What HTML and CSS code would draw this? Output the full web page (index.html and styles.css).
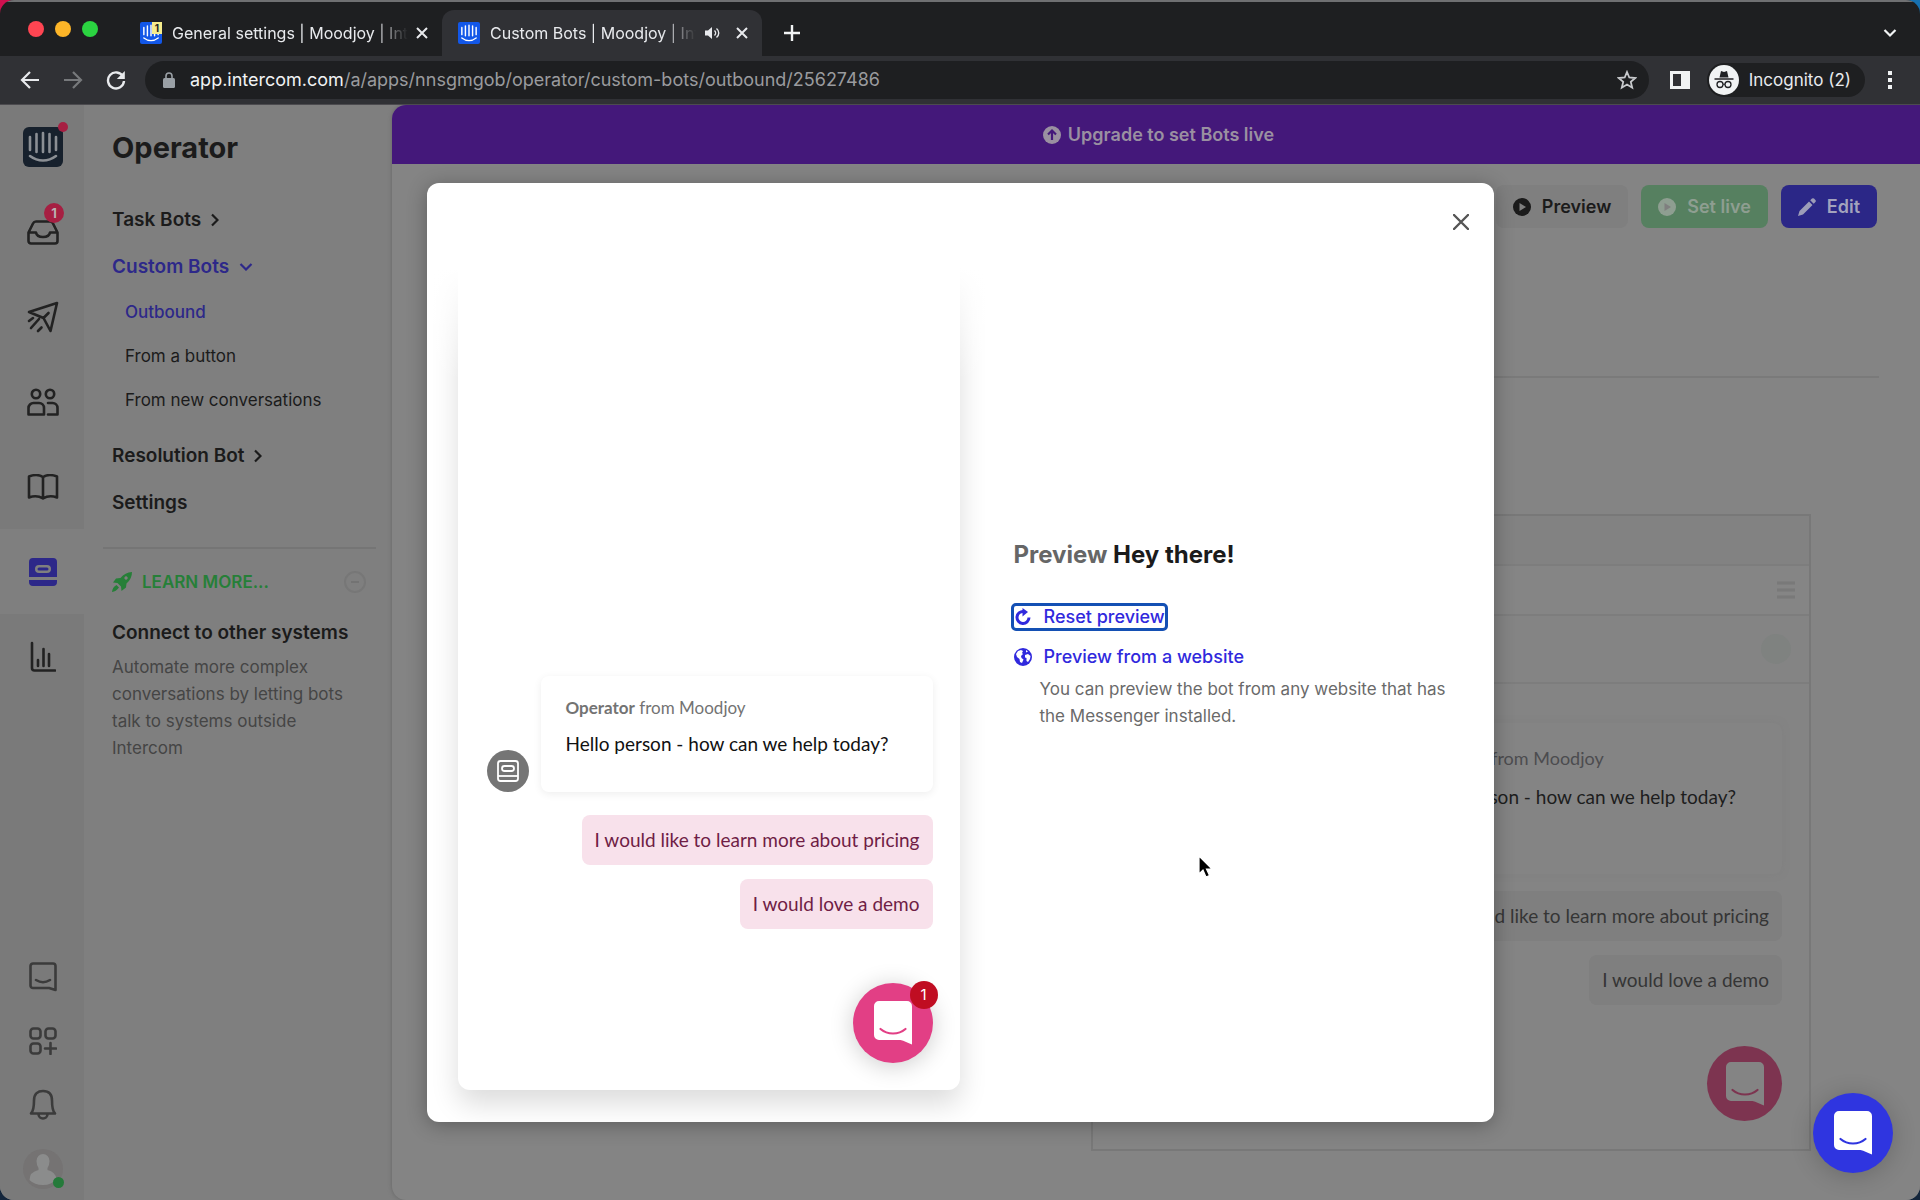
FILE: index.html
```html
<!DOCTYPE html>
<html lang="en">
<head>
<meta charset="utf-8">
<title>Custom Bots | Moodjoy | Intercom</title>
<link rel="stylesheet" href="styles.css">
</head>
<body>
<svg class="defs" width="0" height="0" aria-hidden="true">
  <symbol id="messenger" viewBox="0 0 38 44">
    <path class="card" d="M5 0h28a5 5 0 0 1 5 5v38.500c-4-1.500-8-4-11.500-4.500H5a5 5 0 0 1-5-5V5a5 5 0 0 1 5-5z"/>
    <path fill="none" stroke="currentColor" stroke-width="2.200" stroke-linecap="round" d="M6.500 28c7 6 18 6 25 0"/>
  </symbol>
  <symbol id="bars" viewBox="0 0 40 40">
    <path fill="none" stroke="currentColor" stroke-width="2.600" stroke-linecap="round" d="M7 10v13M13.500 7v18M20 6v19M26.500 7v18M33 10v13M7 29c8 6 18 6 26 0"/>
  </symbol>
  <symbol id="play" viewBox="0 0 18 18">
    <circle cx="9" cy="9" r="9" fill="currentColor"/>
    <path class="cut" d="M6.500 5l6.500 4-6.500 4z"/>
  </symbol>
</svg>

<header class="browser">
  <div class="tabs">
    <div class="lights"><i class="red"></i><i class="amber"></i><i class="green"></i></div>
    <div class="tab">
      <span class="favicon"><svg viewBox="0 0 40 40"><use href="#bars"/></svg><b>1</b></span>
      <span class="tab-title">General settings | Moodjoy | Intercom</span>
      <button class="plain" aria-label="Close tab"><svg width="12" height="12" viewBox="0 0 12 12"><path d="M1 1l10 10M11 1L1 11" stroke="#e8eaed" stroke-width="2" fill="none"/></svg></button>
    </div>
    <div class="tab active">
      <span class="favicon"><svg viewBox="0 0 40 40"><use href="#bars"/></svg></span>
      <span class="tab-title">Custom Bots | Moodjoy | Intercom</span>
      <svg class="sound" width="16" height="14" viewBox="0 0 16 14"><path d="M1 4.500h3L8 1v12L4 9.500H1z" fill="#e8eaed"/><path d="M10.500 4.500c1.500 1.500 1.500 3.500 0 5M12.500 2.500c3 2.500 3 6.500 0 9" stroke="#e8eaed" fill="none" stroke-width="1.400"/></svg>
      <button class="plain" aria-label="Close tab"><svg width="12" height="12" viewBox="0 0 12 12"><path d="M1 1l10 10M11 1L1 11" stroke="#e8eaed" stroke-width="2" fill="none"/></svg></button>
    </div>
    <button class="plain new-tab" aria-label="New tab"><svg width="16" height="16" viewBox="0 0 16 16"><path d="M8 0v16M0 8h16" stroke="#f1f3f4" stroke-width="2.400"/></svg></button>
    <button class="plain tab-search" aria-label="Search tabs"><svg width="14" height="10" viewBox="0 0 14 10"><path d="M1.500 2L7 7.500 12.500 2" stroke="#f1f3f4" stroke-width="2.200" fill="none"/></svg></button>
  </div>
  <div class="toolbar">
    <button class="plain" aria-label="Back"><svg width="20" height="18" viewBox="0 0 20 18"><path d="M19 9H2M10 1L2 9l8 8" stroke="#e8eaed" stroke-width="2.200" fill="none"/></svg></button>
    <button class="plain" aria-label="Forward"><svg width="20" height="18" viewBox="0 0 20 18"><path d="M1 9h17M10 1l8 8-8 8" stroke="#77797c" stroke-width="2.200" fill="none"/></svg></button>
    <button class="plain" aria-label="Reload"><svg width="20" height="20" viewBox="0 0 20 20"><path d="M17 6.500A8 8 0 1 0 18 11" stroke="#e8eaed" stroke-width="2.400" fill="none"/><path d="M18.800 1v8h-8z" fill="#e8eaed"/></svg></button>
    <div class="address">
      <svg width="12" height="16" viewBox="0 0 12 16"><rect y="6" width="12" height="10" rx="1.500" fill="#9aa0a6"/><path d="M3 7V4a3 3 0 0 1 6 0v3" stroke="#9aa0a6" stroke-width="1.600" fill="none"/></svg>
      <span class="url"><b>app.intercom.com</b>/a/apps/nnsgmgob/operator/custom-bots/outbound/25627486</span>
      <svg width="20" height="20" viewBox="0 0 20 20"><path d="M10 2l2.300 5.500 6 .5-4.500 3.900 1.400 5.800L10 14.600l-5.200 3.100 1.400-5.800L1.700 8l6-.5z" stroke="#c8cacd" stroke-width="1.800" fill="none"/></svg>
    </div>
    <svg width="20" height="18" viewBox="0 0 20 18"><path fill="#f1f3f4" fill-rule="evenodd" d="M0 0h20v18H0zM3 3v12h8V3z"/></svg>
    <div class="incognito">
      <svg width="30" height="30" viewBox="0 0 30 30"><circle cx="15" cy="15" r="15" fill="#f1f3f4"/><path d="M10.500 12.500l1.500-6.500 3 1 3-1 1.500 6.500z" fill="#202124"/><path d="M5.500 14h19" stroke="#202124" stroke-width="1.500"/><circle cx="11" cy="19.500" r="3" fill="none" stroke="#202124" stroke-width="1.300"/><circle cx="19" cy="19.500" r="3" fill="none" stroke="#202124" stroke-width="1.300"/><path d="M14 19.500q1-1 2 0" stroke="#202124" fill="none"/></svg>
      <span>Incognito (2)</span>
    </div>
    <button class="plain" aria-label="Menu"><svg width="4" height="18" viewBox="0 0 4 18"><path fill="#f1f3f4" d="M0 0h4v4H0zM0 7h4v4H0zM0 14h4v4H0z"/></svg></button>
  </div>
</header>

<div class="app">
  <nav class="rail" aria-label="Main">
    <a class="logo" href="#" aria-label="Intercom"><svg viewBox="0 0 40 40"><use href="#bars"/></svg><i></i></a>
    <a href="#" aria-label="Inbox"><svg width="34" height="26" viewBox="0 0 34 26"><path d="M2.500 13.500L7 4.500Q8 2.500 10 2.500h14q2 0 3 2l4.500 9V22a2.500 2.500 0 0 1-2.500 2.500H5A2.500 2.500 0 0 1 2.500 22zM2.500 13.500h7.500c1 6 13 6 14 0h7.500"/></svg><b class="count">1</b></a>
    <a href="#" aria-label="Outbound"><svg width="32" height="32" viewBox="0 0 32 32"><path d="M2 11L30 2l-6.500 28-7-13zM16.500 17l5-5M2 20l4-3M4 27l8-9M11 30l3.500-3.500"/></svg></a>
    <a href="#" aria-label="Contacts"><svg width="32" height="28" viewBox="0 0 32 28"><circle cx="9" cy="6" r="4.200"/><circle cx="23" cy="6" r="4.200"/><path d="M1.500 26.500V20a5 5 0 0 1 5-5H12a5 5 0 0 1 5 5v6.500zM21 15h4.500a5 5 0 0 1 5 5v6.500H21"/></svg></a>
    <a href="#" aria-label="Articles"><svg width="32" height="26" viewBox="0 0 32 26"><path d="M16 3C12 .5 6 1 2 2.500v21c4-1.500 10-1.500 14 1 4-2.500 10-2.500 14-1v-21C26 1 20 .5 16 3zv21"/></svg></a>
    <a class="current" href="#" aria-label="Operator"><svg width="28" height="28" viewBox="0 0 28 28"><path class="solid" fill-rule="evenodd" d="M4 0h20a4 4 0 0 1 4 4v15H0V4a4 4 0 0 1 4-4zM10 7a4 4 0 0 0 0 8h8a4 4 0 0 0 0-8zM10 9.500h8a1.500 1.500 0 0 1 0 3h-8a1.500 1.500 0 0 1 0-3zM0 22h28v2a4 4 0 0 1-4 4H4a4 4 0 0 1-4-4z"/></svg></a>
    <a href="#" aria-label="Reports"><svg width="26" height="32" viewBox="0 0 26 32"><path d="M2 2v25q0 2.500 2.500 2.500H25M8 19v6M13.500 8v17M19 13v12"/></svg></a>
    <span class="spacer"></span>
    <a class="minor" href="#" aria-label="Messenger"><svg width="28" height="30" viewBox="0 0 28 30"><path d="M4 1.500h20a2.500 2.500 0 0 1 2.500 2.500v24L20 26H4a2.500 2.500 0 0 1-2.500-2.500V4A2.500 2.500 0 0 1 4 1.500zM7 18q7 4.500 14 0"/></svg></a>
    <a class="minor" href="#" aria-label="Apps"><svg width="28" height="28" viewBox="0 0 28 28"><rect x="1.500" y="1.500" width="10" height="10" rx="3"/><rect x="16.500" y="1.500" width="10" height="10" rx="3"/><rect x="1.500" y="16.500" width="10" height="10" rx="3"/><path d="M21.500 16v11M16 21.500h11"/></svg></a>
    <a class="minor" href="#" aria-label="Notifications"><svg width="28" height="32" viewBox="0 0 28 32"><path d="M2 24.500q3-3 3-13C5 4.500 9 2 14 2s9 2.500 9 9.500q0 10 3 13zM9.500 25c0 6 9 6 9 0"/></svg></a>
    <a class="minor" href="#" aria-label="Profile"><svg class="avatar" width="42" height="40" viewBox="0 0 42 40"><circle cx="21" cy="20" r="20" fill="#757373"/><path fill="#8b8c8c" d="M14.500 12a6.500 7 0 0 1 13 0q0 4-2 7v2q8 2 9 9-5 6-13.500 6T7.500 31q0-8 9-10v-2q-2-3-2-7z"/><circle cx="36.500" cy="33.500" r="5.500" fill="#257a3a"/></svg></a>
  </nav>

  <aside class="side">
    <h1>Operator</h1>
    <nav class="menu" aria-label="Operator">
      <a href="#">Task Bots <svg width="8" height="14" viewBox="0 0 8 14"><path d="M1 1.500L6.500 7 1 12.500"/></svg></a>
      <a class="on" href="#">Custom Bots <svg width="14" height="8" viewBox="0 0 14 8"><path d="M1.500 1L7 6.500 12.500 1"/></svg></a>
      <a class="sub on" href="#">Outbound</a>
      <a class="sub" href="#">From a button</a>
      <a class="sub" href="#">From new conversations</a>
      <a class="after" href="#">Resolution Bot <svg width="8" height="14" viewBox="0 0 8 14"><path d="M1 1.500L6.500 7 1 12.500"/></svg></a>
      <a href="#">Settings</a>
    </nav>
    <section class="learn">
      <div class="learn-head">
        <svg width="20" height="20" viewBox="0 0 20 20"><path fill="#267f38" fill-rule="evenodd" d="M20 0q0 7-5.500 11.500l-.5 4-4.500 3.500-.5-4.500L5.500 11 1 10.500l3-4 4.500-.5Q13 .5 20 0zM14 4.300a1.700 1.700 0 1 0 .1 0zM4.500 13l2.500 2.500Q4 19.500 0 20q.5-5 4.500-7z"/></svg>
        <span>LEARN MORE...</span>
        <button class="plain" aria-label="Collapse"><svg width="22" height="22" viewBox="0 0 22 22"><circle cx="11" cy="11" r="10" fill="none" stroke="#777" stroke-width="2"/><path d="M7 11h8" stroke="#737373" stroke-width="2"/></svg></button>
      </div>
      <h2>Connect to other systems</h2>
      <p>Automate more complex conversations by letting bots talk to systems outside Intercom</p>
    </section>
  </aside>

  <main class="page">
    <a class="banner" href="#"><svg width="18" height="18" viewBox="0 0 18 18"><circle cx="9" cy="9" r="9" fill="#9a90a1"/><path d="M9 14V5M5 8.500L9 4.500l4 4" stroke="#44187a" stroke-width="2.200" fill="none"/></svg>Upgrade to set Bots live</a>
    <div class="actions">
      <button class="btn"><svg width="18" height="18"><use href="#play"/></svg>Preview</button>
      <button class="btn live" disabled><svg width="18" height="18"><use href="#play"/></svg>Set live</button>
      <button class="btn edit"><svg width="18" height="18" viewBox="0 0 18 18"><path fill="#9d9db8" d="M0 18l1.500-5L11 3.500 14.500 7 5 16.500zM12.200 2.300L14 .6q1-.9 2 0l1.400 1.400q.9 1 0 2l-1.700 1.800z"/></svg>Edit</button>
    </div>
    <div class="sample">
      <div class="row"></div>
      <div class="row light"><svg width="18" height="20" viewBox="0 0 18 20"><path d="M0 3h18M0 10h18M0 17h18" stroke="#797979" stroke-width="3"/></svg></div>
      <div class="row tall"><i></i></div>
      <div class="chat">
        <div class="bubble"><p class="from"><b>Operator</b> from Moodjoy</p><p>Hello person - how can we help today?</p></div>
        <span class="reply">I would like to learn more about pricing</span>
        <span class="reply">I would love a demo</span>
        <span class="fab"><svg width="38" height="44"><use href="#messenger"/></svg></span>
      </div>
    </div>
  </main>

  <div class="overlay">
    <div class="modal" role="dialog" aria-label="Preview Hey there!">
      <button class="plain close" aria-label="Close"><svg width="16" height="16" viewBox="0 0 16 16"><path d="M1 1l14 14M15 1L1 15" stroke="#555" stroke-width="2.400" fill="none" stroke-linecap="round"/></svg></button>
      <div class="phone">
        <div class="message">
          <svg width="42" height="42" viewBox="0 0 42 42"><circle cx="21" cy="21" r="21" fill="#757575"/><g fill="none" stroke="#fff" stroke-width="1.800"><rect x="11" y="11" width="20" height="20" rx="2.500"/><rect x="15" y="16" width="12" height="5" rx="2.500"/><path d="M11 26h20"/></g></svg>
          <div class="bubble"><p class="from"><b>Operator</b> from Moodjoy</p><p>Hello person - how can we help today?</p></div>
        </div>
        <button class="reply">I would like to learn more about pricing</button>
        <button class="reply">I would love a demo</button>
        <button class="fab" aria-label="Open Messenger"><svg width="38" height="44"><use href="#messenger"/></svg><b>1</b></button>
      </div>
      <div class="info">
        <h2><span>Preview</span> Hey there!</h2>
        <button class="link focus"><svg width="18" height="18" viewBox="0 0 18 18"><path d="M10 3.500A6 6 0 1 0 15 9.500" stroke="#3029dd" stroke-width="3" fill="none"/><path d="M8.500 0l5.500 4-5.500 4.500z" fill="#3029dd"/></svg>Reset preview</button>
        <a class="link" href="#"><svg width="18" height="18" viewBox="0 0 18 18"><circle cx="9" cy="9" r="9" fill="#3029dd"/><path fill="#fff" d="M4 3l3-1 2 1-1 2 1 1-2 2 .5 2 2 1.500L8 15l-2-1-.5-3L3 9 2 6zM12 2l2 1.500-2 1zM11 7l3-1 2.500 2-.5 3-2 3-1.500-1v-3L11 9.500z"/></svg>Preview from a website</a>
        <p>You can preview the bot from any website that has the Messenger installed.</p>
      </div>
    </div>
  </div>

  <button class="fab launcher" aria-label="Open Intercom Messenger"><svg width="38" height="44"><use href="#messenger"/></svg></button>
  <svg class="cursor" width="16" height="24" viewBox="0 0 16 24"><path d="M1 1v18l4-4 3 7 3.500-1.500-3-6.500H14z" fill="#000" stroke="#fff" stroke-width="1.200"/></svg>
</div>
</body>
</html>
```

FILE: styles.css
```css
* { box-sizing: border-box; }
body {
  margin: 0;
  height: 100vh;
  display: flex;
  flex-direction: column;
  overflow: hidden;
  background:
    radial-gradient(circle at 0 0, #d0104f 20px, transparent 21px),
    radial-gradient(circle at 100% 0, #1670b0 20px, transparent 21px),
    #14263c;
  font: 17px/26px Inter, "Liberation Sans", sans-serif;
  color: #1b1b1b;
}
h1, h2, p { margin: 0; }
a { color: inherit; text-decoration: none; }
button { font: inherit; color: inherit; border: 0; cursor: pointer; }
svg { display: block; flex: none; }
.defs { position: absolute; }
.plain { background: none; padding: 0; display: flex; align-items: center; }

/* Browser frame */
.browser { color: #e8eaed; font-size: 16px; border-radius: 14px 14px 0 0; overflow: hidden; flex: none; }
.tabs {
  height: 56px;
  padding-top: 8px;
  border-top: 2px solid #6f7072;
  background: #1e1f21;
  display: flex;
  align-items: center;
}
.lights { display: flex; gap: 11px; padding: 0 18px 8px 28px; }
.lights i { width: 16px; height: 16px; border-radius: 50%; }
.red { background: #ff4552; }
.amber { background: #fdb528; }
.green { background: #2bd441; }
.tab {
  width: 326px;
  height: 46px;
  padding: 0 14px 0 24px;
  border-radius: 12px 12px 0 0;
  display: flex;
  align-items: center;
  gap: 8px;
}
.tab.active { width: 320px; background: #303135; padding-left: 16px; }
.tab-title {
  flex: 1;
  min-width: 0;
  margin-left: 2px;
  overflow: hidden;
  white-space: nowrap;
  mask-image: linear-gradient(90deg, #000 calc(100% - 34px), transparent);
}
.sound { margin-right: 8px; }
.favicon { position: relative; width: 22px; height: 22px; background: #1257e8; color: #fff; border-radius: 2px; }
.favicon b { position: absolute; right: 0; top: 0; width: 10px; background: #f5ec8c; color: #222; font-size: 10px; line-height: 12px; text-align: center; }
.new-tab { margin-left: 22px; }
.tab-search { margin-left: auto; padding-right: 23px; }
.toolbar {
  height: 49px;
  padding: 0 28px 0 20px;
  background: #303135;
  border-bottom: 1px solid #4c4b4f;
  display: flex;
  align-items: center;
  gap: 23px;
}
.address {
  flex: 1;
  height: 38px;
  margin: 0 -2px 0 -4px;
  padding: 0 12px 0 18px;
  border-radius: 20px;
  background: #1e1f21;
  display: flex;
  align-items: center;
  gap: 15px;
  font-size: 18px;
}
.url { flex: 1; color: #9a9b9e; }
.url b { font-weight: 400; color: #f1f3f4; }
.incognito {
  height: 34px;
  margin: 0 0 0 -6px;
  padding: 0 14px 0 2px;
  border-radius: 17px;
  background: #1e1f21;
  display: flex;
  align-items: center;
  gap: 10px;
  font-size: 17px;
}

/* Application shell */
.app {
  position: relative;
  flex: 1;
  min-height: 0;
  display: flex;
  border-radius: 0 0 14px 14px;
  overflow: hidden;
  background: #7f7f7f;
}
.rail { width: 84px; padding-top: 1px; background: #7a7a7a; display: flex; flex-direction: column; }
.rail a { height: 85px; padding-left: 2px; display: flex; align-items: center; justify-content: center; position: relative; }
.rail svg { fill: none; stroke: #222; stroke-width: 2.600px; stroke-linecap: round; stroke-linejoin: round; }
.rail a.logo {
  width: 40px;
  height: 40px;
  margin: 21px 0 22px 23px;
  padding: 0;
  border-radius: 6px;
  background: #17212d;
  color: #8b8f94;
}
.rail .logo svg { stroke: currentColor; }
.logo i { position: absolute; right: -5px; top: -5px; width: 10px; height: 10px; border-radius: 50%; background: #a61f42; }
.rail .count {
  position: absolute;
  right: 20px;
  top: 14px;
  width: 20px;
  height: 20px;
  border-radius: 50%;
  background: #a61f42;
  color: #b9b0b2;
  font-size: 13px;
  line-height: 20px;
  text-align: center;
}
.rail .current { background: #7f7f7f; }
.rail .solid { fill: #2d2889; stroke: none; }
.rail a.minor { height: 64px; padding-top: 2px; }
.rail .minor svg { stroke: #3b3b3b; }
.rail .minor .avatar { stroke: none; }
.spacer { flex: 1; }

.side { width: 308px; padding: 25px 16px 0 19px; }
.side h1 { font-size: 29px; line-height: 36px; font-weight: 700; padding-left: 9px; margin-bottom: 30px; }
.menu { display: flex; flex-direction: column; padding: 0 0 21px 9px; border-bottom: 2px solid #757575; }
.menu a { height: 47px; display: flex; align-items: center; gap: 10px; font-size: 19px; font-weight: 600; }
.menu a.sub { height: 44px; padding-left: 13px; font-size: 17px; font-weight: 400; }
.menu a.after { margin-top: 10px; }
.menu .on { color: #2d2889; }
.menu a.sub.on { font-weight: 500; }
.menu svg { fill: none; stroke: currentColor; stroke-width: 2.200px; }
.learn { padding: 20px 0 0 9px; }
.learn-head { display: flex; align-items: center; gap: 10px; color: #267f38; font-weight: 600; }
.learn-head .plain { margin-left: auto; margin-right: 10px; }
.learn h2 { font-size: 19px; font-weight: 600; margin: 25px 0 8px; white-space: nowrap; }
.learn p { color: #454545; line-height: 27px; padding-right: 20px; }

.page { flex: 1; min-width: 0; display: flex; flex-direction: column; background: #848484; border-radius: 14px 0 0 14px; overflow: hidden; box-shadow: 0 0 4px #666; }
.banner { height: 59px; padding-left: 5px; background: #44187a; color: #9a90a1; display: flex; align-items: center; justify-content: center; gap: 7px; font-size: 18px; font-weight: 600; }
.actions { height: 214px; margin: 0 41px 0 44px; padding: 21px 2px 0 0; border-bottom: 2px solid #7a7a7a; display: flex; justify-content: flex-end; align-items: flex-start; gap: 13px; }
.btn { height: 43px; padding: 0 17px; border-radius: 8px; background: #7f7f7f; display: flex; align-items: center; gap: 11px; font-size: 18px; font-weight: 600; }
.cut { fill: #7f7f7f; }
.live { background: #568060; color: #8e9e91; }
.edit { background: #2b2787; color: #a3a3bd; }
.sample { width: 720px; height: 637px; margin: 136px 109px 0 auto; border: 2px solid #787878; display: flex; flex-direction: column; flex: none; }
.row { height: 50px; border-bottom: 2px solid #7d7d7d; padding: 0 14px; display: flex; align-items: center; justify-content: flex-end; background: #828282; }
.row.light { background: #858585; }
.row.tall { height: 68px; background: none; padding-right: 18px; }
.row i { width: 30px; height: 30px; border-radius: 50%; background: #7f8280; }

/* Messenger conversation, shared by page sample and preview */
.bubble, .reply { font-family: "Proxima Nova", Lato, sans-serif; font-size: 19px; border-radius: 8px; }
.bubble p { white-space: nowrap; }
.bubble .from { color: #737373; font-size: 17px; margin-bottom: 11px; }
.reply { height: 50px; padding: 0 13px; display: flex; align-items: center; }
.chat { flex: 1; display: flex; flex-direction: column; align-items: flex-end; padding: 39px 27px 0 0; }
.chat .bubble { width: 394px; height: 151px; padding: 22px 25px; margin-bottom: 17px; box-shadow: 0 0 6px #7f7f7f; }
.chat .bubble p { color: #1d1d1d; }
.chat .bubble p.from { color: #4c4c4f; font-size: 18px; margin-bottom: 13px; }
.chat .reply { background: #7f7f7f; color: #353535; margin-bottom: 14px; }
.card { fill: var(--card, #fff); }
.fab {
  position: relative;
  width: 80px;
  height: 80px;
  padding: 0;
  border-radius: 50%;
  background: #e23f85;
  color: #e23f85;
  display: flex;
  align-items: center;
  justify-content: center;
  box-shadow: 0 3px 24px rgba(0, 0, 0, .2);
}
.chat .fab { --card: #848484; width: 75px; height: 75px; margin-top: 27px; background: #7d3450; color: #7d3450; box-shadow: none; }

/* Preview dialog */
.overlay { position: absolute; inset: 0; display: flex; align-items: center; justify-content: center; }
.modal {
  position: relative;
  width: 1067px;
  height: calc(100% - 156px);
  border-radius: 12px;
  background: #fff;
  display: flex;
  padding: 67px 40px 32px 31px;
  gap: 54px;
  box-shadow: 0 3px 20px rgba(0, 0, 0, .3);
  overflow: hidden;
}
.close { position: absolute; right: 25px; top: 31px; }
.phone {
  width: 502px;
  padding: 0 27px 27px;
  border-radius: 0 0 12px 12px;
  display: flex;
  flex-direction: column;
  align-items: flex-end;
  justify-content: flex-end;
  gap: 14px;
  position: relative;
  background: #fff;
  box-shadow: 0 14px 28px rgba(0, 0, 0, .14);
}
/* Fades the panel's shadow out towards the top */
.phone::before {
  content: "";
  position: absolute;
  inset: -20px -30px auto;
  height: 150px;
  background: linear-gradient(#fff 25%, transparent);
}
.message { display: flex; align-items: flex-end; gap: 12px; margin-bottom: 9px; }
.message .bubble { width: 392px; height: 116px; padding: 19px 25px; background: #fff; box-shadow: 0 2px 8px rgba(0, 0, 0, .07); color: #111; }
.message .bubble .from { margin-bottom: 10px; }
.phone .reply { background: #f8e1eb; color: #6f1d45; }
.phone .fab { margin-top: 40px; }
.fab b { position: absolute; right: -5px; top: -2px; width: 28px; height: 28px; border-radius: 50%; background: #c00d22; color: #fff; font-size: 15px; line-height: 28px; font-weight: 400; text-align: center; }
.info { flex: 1; display: flex; flex-direction: column; align-items: flex-start; justify-content: center; padding-bottom: 72px; }
.info h2 { font-size: 24px; line-height: 32px; font-weight: 700; margin-bottom: 35px; }
.info h2 span { color: #666; }
.link { background: none; padding: 0; display: flex; align-items: center; gap: 12px; height: 22px; font-size: 18px; font-weight: 500; color: #3029dd; margin-bottom: 18px; }
.link.focus { outline: 3px solid #1450b4; border-radius: 2px; }
.info p { padding-left: 26px; margin-top: -10px; color: #6a6a6a; line-height: 27px; }

.launcher { position: absolute; right: 27px; bottom: 27px; background: #2f35e0; color: #2f35e0; }
.cursor { position: absolute; left: 1198px; top: 750px; }
```
